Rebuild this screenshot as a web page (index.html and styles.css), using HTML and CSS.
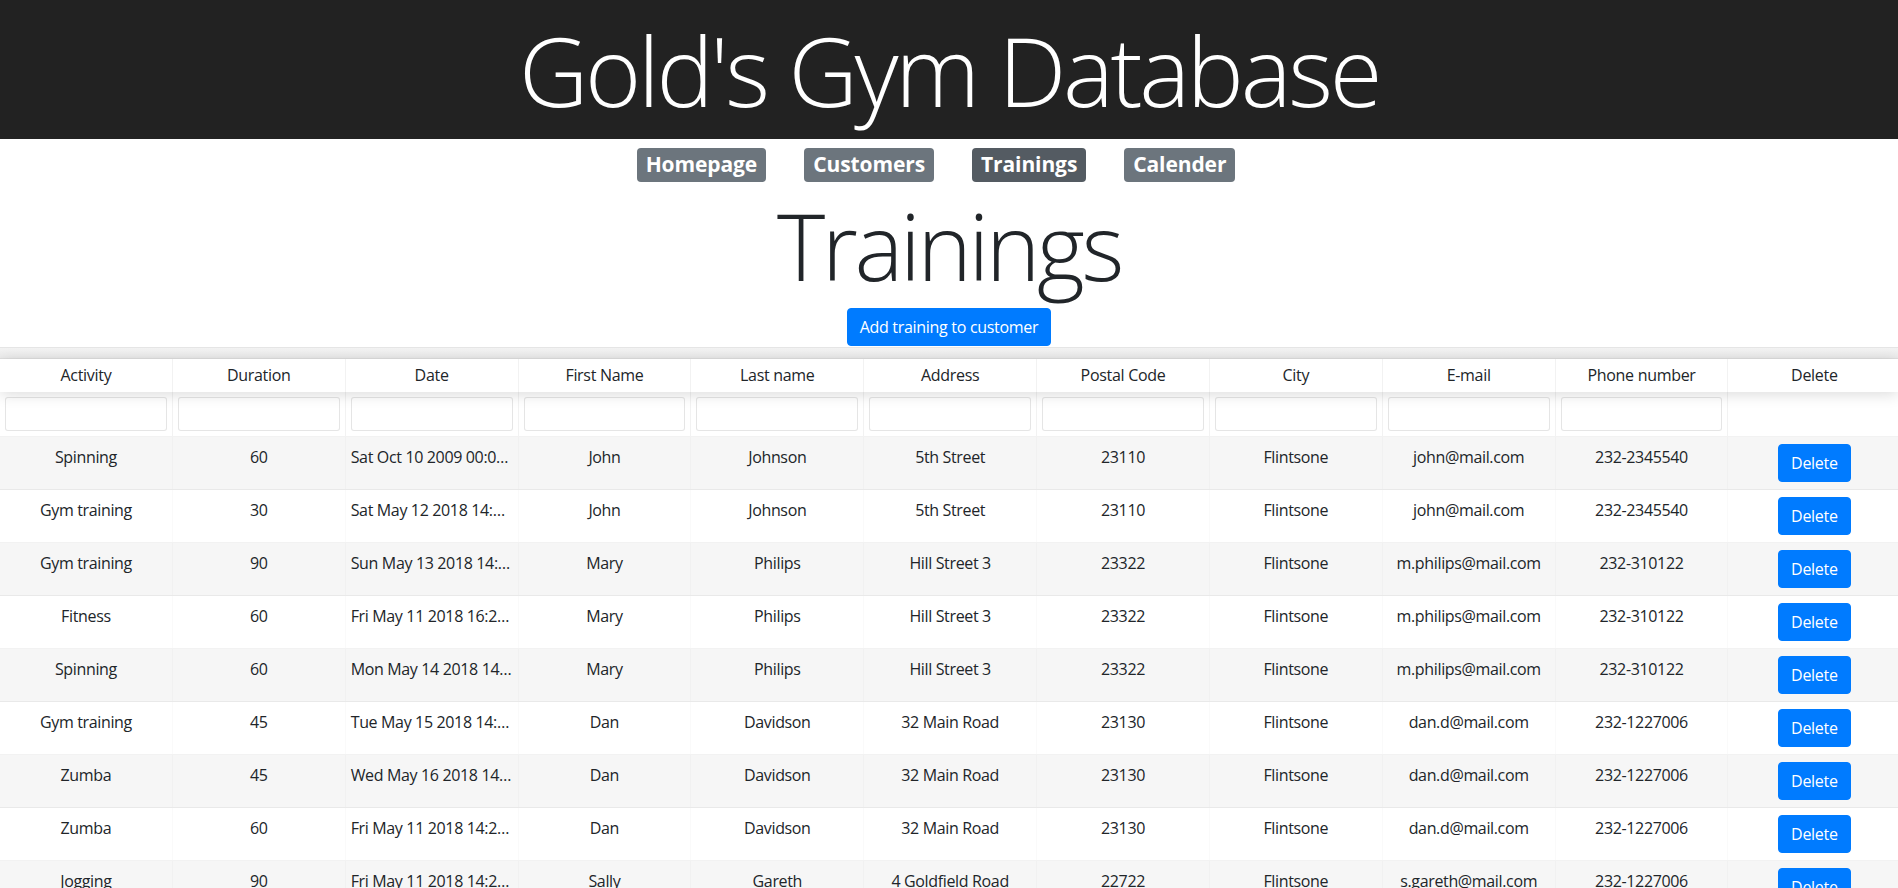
FILE: index.html
```html
<!DOCTYPE html>
<html lang="en">
<head>
<meta charset="utf-8">
<title>Gold's Gym Database</title>
<link rel="stylesheet" href="styles.css">
</head>
<body>
<header class="site-header">
  <h1 class="site-title">Gold's Gym Database</h1>
</header>
<nav class="main-nav">
  <a class="nav-badge" href="#">Homepage</a>
  <a class="nav-badge" href="#">Customers</a>
  <a class="nav-badge active" href="#">Trainings</a>
  <a class="nav-badge" href="#">Calender</a>
</nav>
<main>
  <h1 class="page-title">Trainings</h1>
  <div class="actions"><button class="btn-primary">Add training to customer</button></div>
  <div class="rtable">
    <div class="group-band"></div>
    <div class="thead">
      <div class="tr">
        <div class="th">Activity</div><div class="th">Duration</div><div class="th">Date</div><div class="th">First Name</div><div class="th">Last name</div><div class="th">Address</div><div class="th">Postal Code</div><div class="th">City</div><div class="th">E-mail</div><div class="th">Phone number</div><div class="th">Delete</div>
      </div>
    </div>
    <div class="filters">
      <div class="tr">
        <div class="tf"><input type="text"></div><div class="tf"><input type="text"></div><div class="tf"><input type="text"></div><div class="tf"><input type="text"></div><div class="tf"><input type="text"></div><div class="tf"><input type="text"></div><div class="tf"><input type="text"></div><div class="tf"><input type="text"></div><div class="tf"><input type="text"></div><div class="tf"><input type="text"></div><div class="tf"></div>
      </div>
    </div>
    <div class="tbody">
      <div class="tr odd"><div class="td">Spinning</div><div class="td">60</div><div class="td">Sat Oct 10 2009 00:00:00 GMT+0300</div><div class="td">John</div><div class="td">Johnson</div><div class="td">5th Street</div><div class="td">23110</div><div class="td">Flintsone</div><div class="td">john@mail.com</div><div class="td">232-2345540</div><div class="td"><button class="btn-primary">Delete</button></div></div>
      <div class="tr"><div class="td">Gym training</div><div class="td">30</div><div class="td">Sat May 12 2018 14:00:00 GMT+0300</div><div class="td">John</div><div class="td">Johnson</div><div class="td">5th Street</div><div class="td">23110</div><div class="td">Flintsone</div><div class="td">john@mail.com</div><div class="td">232-2345540</div><div class="td"><button class="btn-primary">Delete</button></div></div>
      <div class="tr odd"><div class="td">Gym training</div><div class="td">90</div><div class="td">Sun May 13 2018 14:00:00 GMT+0300</div><div class="td">Mary</div><div class="td">Philips</div><div class="td">Hill Street 3</div><div class="td">23322</div><div class="td">Flintsone</div><div class="td">m.philips@mail.com</div><div class="td">232-310122</div><div class="td"><button class="btn-primary">Delete</button></div></div>
      <div class="tr"><div class="td">Fitness</div><div class="td">60</div><div class="td">Fri May 11 2018 16:20:00 GMT+0300</div><div class="td">Mary</div><div class="td">Philips</div><div class="td">Hill Street 3</div><div class="td">23322</div><div class="td">Flintsone</div><div class="td">m.philips@mail.com</div><div class="td">232-310122</div><div class="td"><button class="btn-primary">Delete</button></div></div>
      <div class="tr odd"><div class="td">Spinning</div><div class="td">60</div><div class="td">Mon May 14 2018 14:00:00 GMT+0300</div><div class="td">Mary</div><div class="td">Philips</div><div class="td">Hill Street 3</div><div class="td">23322</div><div class="td">Flintsone</div><div class="td">m.philips@mail.com</div><div class="td">232-310122</div><div class="td"><button class="btn-primary">Delete</button></div></div>
      <div class="tr"><div class="td">Gym training</div><div class="td">45</div><div class="td">Tue May 15 2018 14:00:00 GMT+0300</div><div class="td">Dan</div><div class="td">Davidson</div><div class="td">32 Main Road</div><div class="td">23130</div><div class="td">Flintsone</div><div class="td">dan.d@mail.com</div><div class="td">232-1227006</div><div class="td"><button class="btn-primary">Delete</button></div></div>
      <div class="tr odd"><div class="td">Zumba</div><div class="td">45</div><div class="td">Wed May 16 2018 14:00:00 GMT+0300</div><div class="td">Dan</div><div class="td">Davidson</div><div class="td">32 Main Road</div><div class="td">23130</div><div class="td">Flintsone</div><div class="td">dan.d@mail.com</div><div class="td">232-1227006</div><div class="td"><button class="btn-primary">Delete</button></div></div>
      <div class="tr"><div class="td">Zumba</div><div class="td">60</div><div class="td">Fri May 11 2018 14:20:00 GMT+0300</div><div class="td">Dan</div><div class="td">Davidson</div><div class="td">32 Main Road</div><div class="td">23130</div><div class="td">Flintsone</div><div class="td">dan.d@mail.com</div><div class="td">232-1227006</div><div class="td"><button class="btn-primary">Delete</button></div></div>
      <div class="tr odd"><div class="td">Jogging</div><div class="td">90</div><div class="td">Fri May 11 2018 14:20:00 GMT+0300</div><div class="td">Sally</div><div class="td">Gareth</div><div class="td">4 Goldfield Road</div><div class="td">22722</div><div class="td">Flintsone</div><div class="td">s.gareth@mail.com</div><div class="td">232-1227006</div><div class="td"><button class="btn-primary">Delete</button></div></div>
    </div>
  </div>
</main>
</body>
</html>
```
FILE: styles.css
```css
* { box-sizing: border-box; }
html, body { margin: 0; padding: 0; }
body {
  font-family: "Open Sans", "Noto Sans", sans-serif;
  font-size: 16px;
  line-height: 1.5;
  color: #212529;
  background: #fff;
}
.site-header {
  background: #222222;
  padding: 12px 0;
  text-align: center;
}
.site-title {
  margin: 0;
  font-size: 96px;
  font-weight: 300;
  line-height: 115px;
  color: #fff;
  letter-spacing: -3.3px;
}
.main-nav {
  display: flex;
  justify-content: center;
  gap: 38px;
  padding: 9px 26px 0 0;
}
.nav-badge {
  display: inline-block;
  background: #6c757d;
  color: #fff;
  font-weight: 700;
  font-size: 21px;
  line-height: 1;
  padding: 6px 9px 7px;
  border-radius: 4px;
  text-decoration: none;
  letter-spacing: -0.1px;
}
.nav-badge.active { background: #545b62; }
.page-title {
  margin: 6px 0 0;
  text-align: center;
  font-size: 92px;
  font-weight: 300;
  line-height: 115px;
  letter-spacing: -3.3px;
}
.actions {
  display: flex;
  justify-content: center;
  padding-top: 5px;
}
.btn-primary {
  font-family: inherit;
  font-size: 16px;
  line-height: 24px;
  padding: 6px 12px;
  border: 1px solid #007bff;
  background: #007bff;
  color: #fff;
  border-radius: 4px;
  letter-spacing: -0.3px;
}
.rtable {
  margin-top: 1px;
  border-top: 1px solid rgba(0,0,0,0.1);
  overflow: hidden;
}
.group-band {
  height: 11px;
  background: linear-gradient(#f3f3f3, #ececec);
  border-bottom: 1px solid #e0e0e0;
}
.tr {
  display: grid;
  grid-template-columns: repeat(11, 172.85px);
}
.thead {
  position: relative;
  z-index: 2;
  background: #fff;
  box-shadow: 0 2px 15px 0 rgba(0,0,0,0.15);
}
.th {
  text-align: center;
  padding: 4px 5px 5px;
  line-height: 24px;
  border-right: 1px solid rgba(0,0,0,0.05);
  letter-spacing: -0.3px;
}
.filters {
  border-bottom: 1px solid rgba(0,0,0,0.05);
}
.tf {
  padding: 5px 5px 5px;
  border-right: 1px solid rgba(0,0,0,0.05);
  height: 44px;
}
.tf:last-child { border-right: 0; }
.tf input {
  display: block;
  width: 100%;
  height: 34px;
  border: 1px solid rgba(0,0,0,0.1);
  border-radius: 3px;
  background: #fff;
  padding: 5px 7px;
  font: inherit;
}
.tbody .tr {
  border-bottom: 1px solid rgba(0,0,0,0.05);
}
.tbody .tr.odd { background: rgba(0,0,0,0.035); }
.td {
  padding: 8px 5px 7px;
  text-align: center;
  white-space: nowrap;
  overflow: hidden;
  text-overflow: ellipsis;
  line-height: 24px;
  border-right: 1px solid rgba(0,0,0,0.02);
  letter-spacing: -0.35px;
}
.td .btn-primary { margin-top: -1px; }
```
